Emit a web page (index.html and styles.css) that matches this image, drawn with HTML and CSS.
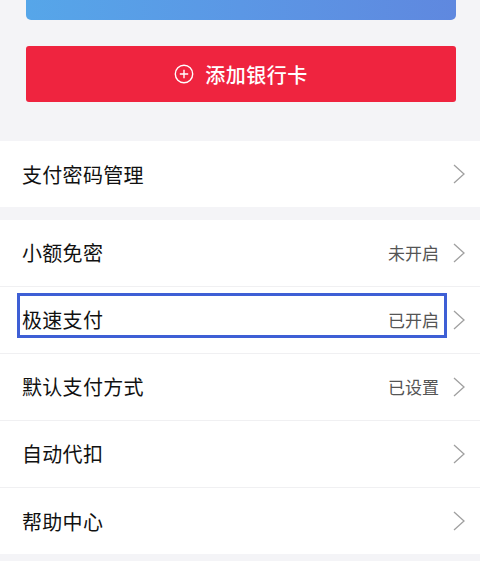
FILE: index.html
```html
<!DOCTYPE html>
<html lang="zh">
<head>
<meta charset="utf-8">
<link rel="stylesheet" href="styles.css">
</head>
<body>
<div class="page">
  <div class="top">
    <div class="card"></div>
    <div class="add-btn">
      <svg class="plus" width="20" height="20" viewBox="0 0 20 20"><circle cx="10" cy="10" r="8.7" fill="none" stroke="#fff" stroke-width="1.4"/><path d="M10 5.8v8.4M5.8 10h8.4" stroke="#fff" stroke-width="1.4"/></svg>
      <span>添加银行卡</span>
    </div>
  </div>
  <div class="group">
    <div class="row"><span class="label">支付密码管理</span><span class="right"><span class="chev"></span></span></div>
  </div>
  <div class="group second">
    <div class="row"><span class="label">小额免密</span><span class="right"><span class="status">未开启</span><span class="chev"></span></span></div>
    <div class="row"><span class="label">极速支付</span><span class="right"><span class="status">已开启</span><span class="chev"></span></span><div class="highlight"></div></div>
    <div class="row"><span class="label">默认支付方式</span><span class="right"><span class="status">已设置</span><span class="chev"></span></span></div>
    <div class="row"><span class="label">自动代扣</span><span class="right"><span class="chev"></span></span></div>
    <div class="row last"><span class="label">帮助中心</span><span class="right"><span class="chev"></span></span></div>
  </div>
</div>
</body>
</html>
```
FILE: styles.css
```css
* { box-sizing: border-box; }
html, body { margin: 0; padding: 0; }
body {
  background: #f4f4f7;
  font-family: "Noto Sans CJK SC", "Noto Sans", sans-serif;
  width: 480px;
  height: 561px;
  overflow: hidden;
}
.page { display: flex; flex-direction: column; }
.top {
  padding: 0 24px 0 26px;
  height: 141px;
}
.card {
  height: 20px;
  border-radius: 0 0 5px 5px;
  background: linear-gradient(90deg, #56a6e9 0%, #5b97e5 50%, #5f88df 100%);
}
.add-btn {
  margin-top: 26px;
  height: 56px;
  border-radius: 3px;
  background: #ef243f;
  color: #fff;
  display: flex;
  align-items: center;
  justify-content: center;
  gap: 11px;
  font-size: 20px;
  font-weight: 500;
  letter-spacing: 0.5px;
}
.plus { display: block; }
.group { background: #fff; }
.group.second { margin-top: 13px; }
.row {
  position: relative;
  height: 67px;
  display: flex;
  align-items: center;
  justify-content: space-between;
  padding: 0 15px 1px 22px;
  border-bottom: 1px solid #f0f0f2;
}
.group .row:only-child { height: 66px; border-bottom: none; padding-bottom: 0; }
.row.last { height: 66px; border-bottom: none; padding-bottom: 0; }
.label {
  font-size: 20px;
  font-weight: 400;
  color: #111;
  letter-spacing: 0.3px;
}
.right { display: flex; align-items: center; }
.status {
  font-size: 17px;
  color: #555;
  margin-right: 14px;
}
.chev {
  width: 12px;
  height: 20px;
  background: no-repeat center / 12px 20px url("data:image/svg+xml;utf8,<svg xmlns='http://www.w3.org/2000/svg' width='12' height='20' viewBox='0 0 12 20'><path d='M1 1l10 9-10 9' fill='none' stroke='%23a0a0a0' stroke-width='1.3'/></svg>");
}
.highlight {
  position: absolute;
  left: 17px;
  top: 6px;
  width: 430px;
  height: 45px;
  border: 3px solid #3e5fd5;
  pointer-events: none;
}
```
